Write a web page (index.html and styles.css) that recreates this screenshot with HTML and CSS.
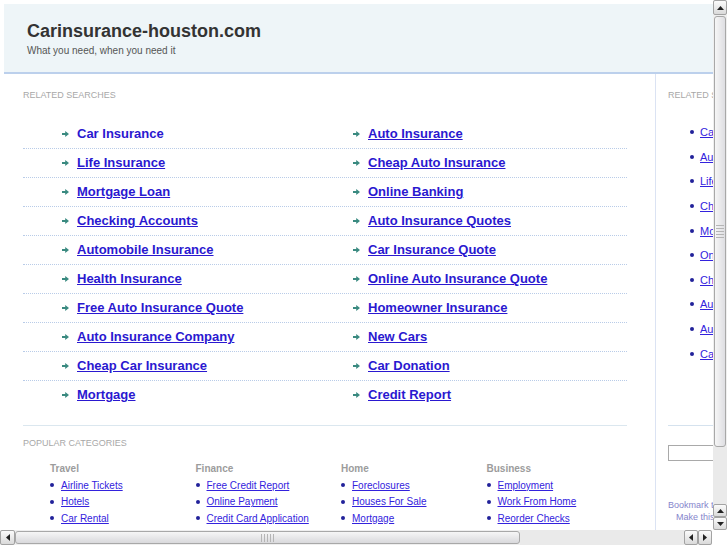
FILE: index.html
```html
<!DOCTYPE html>
<html>
<head>
<meta charset="utf-8">
<title>Carinsurance-houston.com</title>
<link rel="stylesheet" href="styles.css">
</head>
<body>
<div class="page">
  <header class="top">
    <h1 class="site-title">Carinsurance-houston.com</h1>
    <p class="tagline">What you need, when you need it</p>
  </header>
  <div class="main">
    <div class="content">
      <div class="label">RELATED SEARCHES</div>
      <div class="rows">
        <div class="row"><a class="item nou" href="#"><svg class="arr" viewBox="0 0 7 6"><path d="M0 2.1h3.2V0L7 3 3.2 6V3.9H0z"/></svg><span>Car Insurance</span></a><a class="item" href="#"><svg class="arr" viewBox="0 0 7 6"><path d="M0 2.1h3.2V0L7 3 3.2 6V3.9H0z"/></svg><span>Auto Insurance</span></a></div>
        <div class="row"><a class="item" href="#"><svg class="arr" viewBox="0 0 7 6"><path d="M0 2.1h3.2V0L7 3 3.2 6V3.9H0z"/></svg><span>Life Insurance</span></a><a class="item" href="#"><svg class="arr" viewBox="0 0 7 6"><path d="M0 2.1h3.2V0L7 3 3.2 6V3.9H0z"/></svg><span>Cheap Auto Insurance</span></a></div>
        <div class="row"><a class="item" href="#"><svg class="arr" viewBox="0 0 7 6"><path d="M0 2.1h3.2V0L7 3 3.2 6V3.9H0z"/></svg><span>Mortgage Loan</span></a><a class="item" href="#"><svg class="arr" viewBox="0 0 7 6"><path d="M0 2.1h3.2V0L7 3 3.2 6V3.9H0z"/></svg><span>Online Banking</span></a></div>
        <div class="row"><a class="item" href="#"><svg class="arr" viewBox="0 0 7 6"><path d="M0 2.1h3.2V0L7 3 3.2 6V3.9H0z"/></svg><span>Checking Accounts</span></a><a class="item" href="#"><svg class="arr" viewBox="0 0 7 6"><path d="M0 2.1h3.2V0L7 3 3.2 6V3.9H0z"/></svg><span>Auto Insurance Quotes</span></a></div>
        <div class="row"><a class="item" href="#"><svg class="arr" viewBox="0 0 7 6"><path d="M0 2.1h3.2V0L7 3 3.2 6V3.9H0z"/></svg><span>Automobile Insurance</span></a><a class="item" href="#"><svg class="arr" viewBox="0 0 7 6"><path d="M0 2.1h3.2V0L7 3 3.2 6V3.9H0z"/></svg><span>Car Insurance Quote</span></a></div>
        <div class="row"><a class="item" href="#"><svg class="arr" viewBox="0 0 7 6"><path d="M0 2.1h3.2V0L7 3 3.2 6V3.9H0z"/></svg><span>Health Insurance</span></a><a class="item" href="#"><svg class="arr" viewBox="0 0 7 6"><path d="M0 2.1h3.2V0L7 3 3.2 6V3.9H0z"/></svg><span>Online Auto Insurance Quote</span></a></div>
        <div class="row"><a class="item" href="#"><svg class="arr" viewBox="0 0 7 6"><path d="M0 2.1h3.2V0L7 3 3.2 6V3.9H0z"/></svg><span>Free Auto Insurance Quote</span></a><a class="item" href="#"><svg class="arr" viewBox="0 0 7 6"><path d="M0 2.1h3.2V0L7 3 3.2 6V3.9H0z"/></svg><span>Homeowner Insurance</span></a></div>
        <div class="row"><a class="item" href="#"><svg class="arr" viewBox="0 0 7 6"><path d="M0 2.1h3.2V0L7 3 3.2 6V3.9H0z"/></svg><span>Auto Insurance Company</span></a><a class="item" href="#"><svg class="arr" viewBox="0 0 7 6"><path d="M0 2.1h3.2V0L7 3 3.2 6V3.9H0z"/></svg><span>New Cars</span></a></div>
        <div class="row"><a class="item" href="#"><svg class="arr" viewBox="0 0 7 6"><path d="M0 2.1h3.2V0L7 3 3.2 6V3.9H0z"/></svg><span>Cheap Car Insurance</span></a><a class="item" href="#"><svg class="arr" viewBox="0 0 7 6"><path d="M0 2.1h3.2V0L7 3 3.2 6V3.9H0z"/></svg><span>Car Donation</span></a></div>
        <div class="row last"><a class="item" href="#"><svg class="arr" viewBox="0 0 7 6"><path d="M0 2.1h3.2V0L7 3 3.2 6V3.9H0z"/></svg><span>Mortgage</span></a><a class="item" href="#"><svg class="arr" viewBox="0 0 7 6"><path d="M0 2.1h3.2V0L7 3 3.2 6V3.9H0z"/></svg><span>Credit Report</span></a></div>
      </div>
      <div class="sep"></div>
      <div class="label label-pop">POPULAR CATEGORIES</div>
      <div class="cats">
        <div class="cat">
          <div class="cat-title">Travel</div>
          <ul class="cat-list">
            <li><a href="#">Airline Tickets</a></li>
            <li><a href="#">Hotels</a></li>
            <li><a href="#">Car Rental</a></li>
          </ul>
        </div>
        <div class="cat">
          <div class="cat-title">Finance</div>
          <ul class="cat-list">
            <li><a href="#">Free Credit Report</a></li>
            <li><a href="#">Online Payment</a></li>
            <li><a href="#">Credit Card Application</a></li>
          </ul>
        </div>
        <div class="cat">
          <div class="cat-title">Home</div>
          <ul class="cat-list">
            <li><a href="#">Foreclosures</a></li>
            <li><a href="#">Houses For Sale</a></li>
            <li><a href="#">Mortgage</a></li>
          </ul>
        </div>
        <div class="cat">
          <div class="cat-title">Business</div>
          <ul class="cat-list">
            <li><a href="#">Employment</a></li>
            <li><a href="#">Work From Home</a></li>
            <li><a href="#">Reorder Checks</a></li>
          </ul>
        </div>
      </div>
    </div>
    <aside class="side">
      <div class="label">RELATED SEARCHES</div>
      <ul class="side-list">
        <li><a href="#">Car Insurance</a></li>
        <li><a href="#">Auto Insurance</a></li>
        <li><a href="#">Life Insurance</a></li>
        <li><a href="#">Cheap Auto Insurance</a></li>
        <li><a href="#">Mortgage Loan</a></li>
        <li><a href="#">Online Banking</a></li>
        <li><a href="#">Checking Accounts</a></li>
        <li><a href="#">Auto Insurance Quotes</a></li>
        <li><a href="#">Automobile Insurance</a></li>
        <li><a href="#">Car Insurance Quote</a></li>
      </ul>
      <div class="side-sep"></div>
      <input class="search" type="text">
      <div class="bm">Bookmark this page</div>
      <div class="bm bm2">Make this your homepage</div>
    </aside>
  </div>
</div>

<div class="vscroll">
  <div class="sbtn"><svg viewBox="0 0 7 4" class="tri"><path d="M0 4L3.5 0 7 4z"/></svg></div>
  <div class="vthumb"><div class="grip"></div></div>
  <div class="vtrack"></div>
  <div class="sbtn sbtn-sm"><svg viewBox="0 0 7 4" class="tri"><path d="M0 4L3.5 0 7 4z"/></svg></div>
  <div class="sbtn sbtn-sm"><svg viewBox="0 0 7 4" class="tri"><path d="M0 0L3.5 4 7 0z"/></svg></div>
</div>
<div class="hscroll">
  <div class="hbtn"><svg viewBox="0 0 4 7" class="trih"><path d="M4 0L0 3.5 4 7z"/></svg></div>
  <div class="hthumb"><div class="grip"></div></div>
  <div class="htrack"></div>
  <div class="hbtn hbtn-sm"><svg viewBox="0 0 4 7" class="trih"><path d="M4 0L0 3.5 4 7z"/></svg></div>
  <div class="hbtn hbtn-sm"><svg viewBox="0 0 4 7" class="trih"><path d="M0 0L4 3.5 0 7z"/></svg></div>
</div>
<div class="corner"></div>
</body>
</html>
```

FILE: styles.css
```css
html, body {
  margin: 0;
  padding: 0;
  overflow: hidden;
  width: 727px;
  height: 545px;
  background: #ffffff;
  font-family: "Liberation Sans", Arial, sans-serif;
}

.page {
  width: 960px;
  padding: 4px 0 0 4px;
}

.top {
  background: #eef5f8;
  border-bottom: 2px solid #bcd0ec;
  padding: 16px 0 0 23px;
  box-sizing: border-box;
  height: 70px;
}

.site-title {
  margin: 0;
  font-size: 18px;
  line-height: 22px;
  font-weight: bold;
  color: #333333;
}

.tagline {
  margin: 3px 0 0;
  font-size: 10px;
  line-height: 12px;
  color: #555555;
}

.main {
  display: flex;
  align-items: stretch;
}

.content {
  width: 652px;
  box-sizing: border-box;
  padding: 0 28px 40px 19px;
  border-right: 1px solid #dbe3f3;
}

.label {
  margin-top: 16px;
  font-size: 9px;
  line-height: 11px;
  color: #a8a8a8;
}

.rows {
  margin-top: 19px;
}

.row {
  display: grid;
  grid-template-columns: 291px 1fr;
  padding-left: 39px;
  height: 28px;
  border-bottom: 1px dotted #b9cce8;
}

.row.last {
  border-bottom: none;
}

.item {
  display: flex;
  align-items: center;
  font-size: 13px;
  line-height: 28px;
  font-weight: bold;
  color: #2a18d0;
  text-decoration: none;
}

.item span {
  text-decoration: underline;
}

.item.nou span {
  text-decoration: none;
}

.arr {
  width: 7px;
  height: 6px;
  margin-right: 8px;
  fill: #3a8a80;
  flex: none;
}

.sep {
  margin-top: 16px;
  border-top: 1px solid #dbe7ef;
}

.label-pop {
  margin-top: 12px;
}

.cats {
  display: grid;
  grid-template-columns: repeat(4, 145.5px);
  padding-left: 27px;
  margin-top: 14px;
}

.cat-title {
  font-size: 10px;
  line-height: 12px;
  font-weight: bold;
  color: #9c9c9c;
}

.cat-list {
  list-style: none;
  margin: 2px 0 0;
  padding: 0;
}

.cat-list li {
  display: flex;
  align-items: center;
  height: 16.5px;
  font-size: 10px;
}

.cat-list li::before,
.side-list li::before {
  content: "";
  width: 4px;
  height: 4px;
  border-radius: 50%;
  background: #22229a;
  margin-right: 7px;
  flex: none;
}

.cat-list a {
  color: #3322dd;
  text-decoration: underline;
}

.side {
  width: 260px;
  padding-left: 12px;
  box-sizing: border-box;
}

.side-list {
  list-style: none;
  margin: 19px 0 0;
  padding: 0 0 0 22px;
}

.side-list li {
  display: flex;
  align-items: center;
  height: 24.6px;
  font-size: 11px;
}

.side-list li::before {
  margin-right: 6px;
}

.side-list a {
  color: #3322dd;
  text-decoration: underline;
}

.side-sep {
  margin-top: 59px;
  border-top: 1px solid #d5e2ee;
}

.search {
  display: block;
  margin: 19px 0 0;
  width: 200px;
  height: 16px;
  box-sizing: border-box;
  border: 1px solid #a9a9a9;
  padding: 0;
}

.bm {
  margin-top: 38px;
  font-size: 9px;
  line-height: 12px;
  color: #8585cc;
}

.bm2 {
  margin-top: 0;
  padding-left: 8px;
}

/* scrollbars overlay */
.vscroll {
  position: fixed;
  top: 0;
  right: 0;
  width: 14px;
  height: 530px;
  display: flex;
  flex-direction: column;
  background: #efefef;
}

.sbtn {
  height: 15px;
  box-sizing: border-box;
  border: 1px solid #a3a3a3;
  border-radius: 2px;
  background: linear-gradient(#fbfbfb, #dadada);
  display: flex;
  align-items: center;
  justify-content: center;
  flex: none;
}

.sbtn-sm {
  height: 13px;
}

.tri {
  width: 7px;
  height: 4px;
  fill: #222;
}

.vthumb {
  margin: 1px 1px 0;
  height: 431px;
  box-sizing: border-box;
  border: 1px solid #a8a8a8;
  border-radius: 3px;
  background: linear-gradient(to right, #f6f6f6, #dedee2);
  display: flex;
  align-items: center;
  justify-content: center;
  flex: none;
}

.vtrack {
  flex: 1;
  background-color: #f2f2f2;
  background-image: radial-gradient(circle, #e0e0e0 0.6px, transparent 0.8px);
  background-size: 2px 2px;
}

.grip {
  width: 8px;
  height: 16px;
  background-image: radial-gradient(circle, #b5b5b5 0.7px, transparent 0.9px);
  background-size: 2px 3px;
}

.hscroll {
  position: fixed;
  left: 0;
  bottom: 0;
  width: 712px;
  height: 15px;
  display: flex;
  background: #efefef;
}

.hbtn {
  width: 15px;
  box-sizing: border-box;
  border: 1px solid #a3a3a3;
  border-radius: 2px;
  background: linear-gradient(#fbfbfb, #dadada);
  display: flex;
  align-items: center;
  justify-content: center;
  flex: none;
}

.hbtn-sm {
  width: 14px;
}

.trih {
  width: 4px;
  height: 7px;
  fill: #222;
}

.hthumb {
  width: 505px;
  margin: 1px 0;
  box-sizing: border-box;
  border: 1px solid #a8a8a8;
  border-radius: 3px;
  background: linear-gradient(#f6f6f6, #d9d9dc);
  display: flex;
  align-items: center;
  justify-content: center;
  flex: none;
}

.hthumb .grip {
  width: 16px;
  height: 8px;
  background-size: 3px 2px;
}

.htrack {
  flex: 1;
  background-color: #f2f2f2;
  background-image: radial-gradient(circle, #e0e0e0 0.6px, transparent 0.8px);
  background-size: 2px 2px;
}

.corner {
  position: fixed;
  right: 0;
  bottom: 0;
  width: 15px;
  height: 15px;
  background: #ffffff;
}
```
